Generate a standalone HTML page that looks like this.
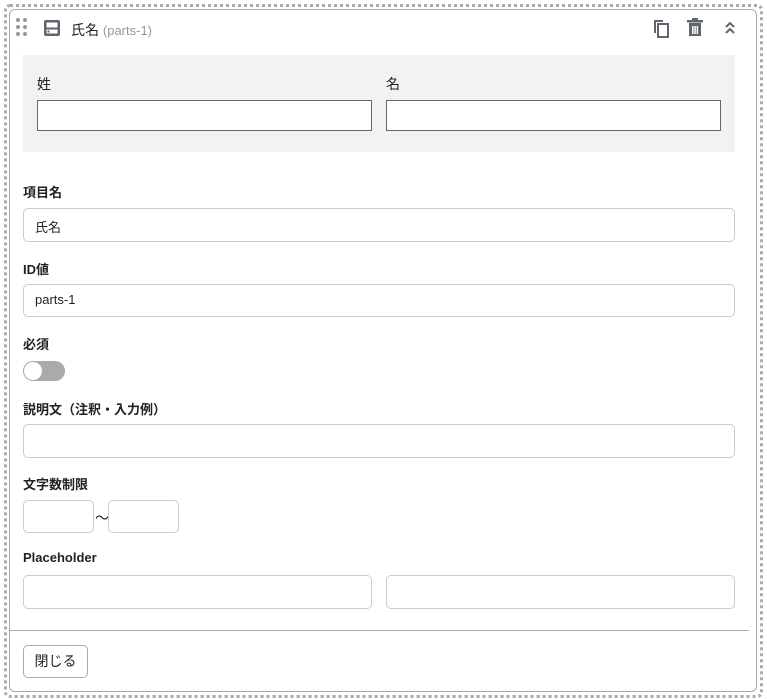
<!DOCTYPE html>
<html><head><meta charset="utf-8"><style>
*{box-sizing:border-box;margin:0;padding:0}
body{width:767px;height:699px;background:#fff;font-family:"Liberation Sans","Noto Sans CJK JP",sans-serif;color:#222;position:relative;overflow:hidden;font-size:13px}
.a{position:absolute}
.outer{left:4px;top:4px;width:759px;height:694px;border:3px dotted #aaa;border-radius:6px}
.card{left:9px;top:9px;width:748px;height:683px;border:1px solid #aaa;border-radius:6px;background:#fff}
.lbl{font-weight:bold;font-size:13px;left:23px}
.inp{border:1px solid #ccc;border-radius:5px;background:#fff}
.dinp{border:1px solid #666;background:#fff}
</style></head><body>
<div class="a outer"></div>
<div class="a card"></div>
<svg class="a" style="left:16px;top:18px" width="12" height="22"><g fill="#999"><circle cx="2" cy="2" r="2"/><circle cx="9" cy="2" r="2"/><circle cx="2" cy="9" r="2"/><circle cx="9" cy="9" r="2"/><circle cx="2" cy="16" r="2"/><circle cx="9" cy="16" r="2"/></g></svg>
<svg class="a" style="left:43px;top:19px" width="18" height="18"><rect x="1" y="1" width="16" height="16" rx="2" fill="#5f6670"/><rect x="3.5" y="3.5" width="11" height="5" fill="#fff"/><rect x="3.5" y="10.5" width="11" height="4" fill="#fff"/><rect x="4.5" y="11.5" width="2" height="2" fill="#5f6670"/></svg>
<div class="a" style="left:71px;top:20px;font-size:14px">氏名 <span style="color:#999;font-size:13px">(parts-1)</span></div>
<svg class="a" style="left:651px;top:18px" width="20" height="20"><path d="M3 2h9v2H5v11H3z" fill="#5f6670"/><rect x="7" y="6" width="10" height="13" fill="none" stroke="#5f6670" stroke-width="2"/></svg>
<svg class="a" style="left:686px;top:18px" width="18" height="20"><rect x="1" y="2" width="16" height="2.5" fill="#5f6670"/><rect x="6" y="0" width="6" height="3" fill="#5f6670"/><path d="M3 5h12v13H3z" fill="#5f6670"/><rect x="6" y="8" width="1.5" height="8" fill="#fff"/><rect x="8.3" y="8" width="1.5" height="8" fill="#fff"/><rect x="10.6" y="8" width="1.5" height="8" fill="#fff"/></svg>
<svg class="a" style="left:724px;top:21px" width="12" height="14"><path d="M2 6l4-4 4 4M2 12l4-4 4 4" fill="none" stroke="#5f6670" stroke-width="2"/></svg>
<div class="a" style="left:23px;top:55px;width:712px;height:97px;background:#f2f2f2"></div>
<div class="a" style="left:37px;top:74px;font-size:14px">姓</div>
<div class="a" style="left:386px;top:74px;font-size:14px">名</div>
<div class="a dinp" style="left:37px;top:100px;width:335px;height:31px"></div>
<div class="a dinp" style="left:386px;top:100px;width:335px;height:31px"></div>
<div class="a lbl" style="top:182px">項目名</div>
<div class="a inp" style="left:23px;top:208px;width:712px;height:34px"></div>
<div class="a" style="left:35px;top:217px;font-size:13px">氏名</div>
<div class="a lbl" style="top:259px">ID値</div>
<div class="a inp" style="left:23px;top:284px;width:712px;height:33px"></div>
<div class="a" style="left:35px;top:292px;font-size:13px">parts-1</div>
<div class="a lbl" style="top:334px">必須</div>
<div class="a" style="left:23px;top:361px;width:42px;height:20px;border-radius:10px;background:#aaa"></div>
<div class="a" style="left:24px;top:362px;width:18px;height:18px;border-radius:9px;background:#fff"></div>
<div class="a lbl" style="top:399px">説明文（注釈・入力例）</div>
<div class="a inp" style="left:23px;top:424px;width:712px;height:34px"></div>
<div class="a lbl" style="top:474px">文字数制限</div>
<div class="a inp" style="left:23px;top:500px;width:71px;height:33px"></div>
<div class="a" style="left:95px;top:508px;font-size:14px">～</div>
<div class="a inp" style="left:108px;top:500px;width:71px;height:33px"></div>
<div class="a lbl" style="top:550px">Placeholder</div>
<div class="a inp" style="left:23px;top:575px;width:349px;height:34px"></div>
<div class="a inp" style="left:386px;top:575px;width:349px;height:34px"></div>
<div class="a" style="left:9px;top:630px;width:740px;height:1px;background:#aaa"></div>
<div class="a" style="left:23px;top:645px;width:65px;height:33px;border:1px solid #aaa;border-radius:5px;text-align:center;line-height:31px;font-size:14px">閉じる</div>
</body></html>
